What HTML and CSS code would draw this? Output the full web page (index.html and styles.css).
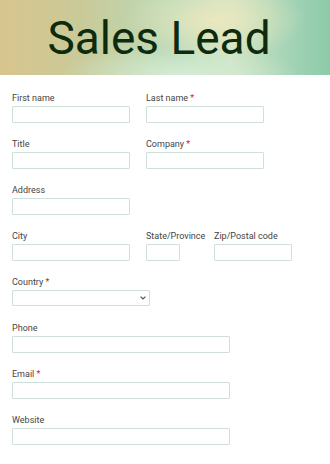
FILE: index.html
```html
<!DOCTYPE html>
<html lang="en">
<head>
    <meta charset="UTF-8">
    <title>Sales Lead</title>
    <link rel="stylesheet" href="styles.css">
</head>
<body>
<div class="banner">
    <h1>Sales Lead</h1>
</div>

<form class="lead-form">
    <div class="row">
        <div class="field w118">
            <label>First name</label>
            <input type="text">
        </div>
        <div class="field w118">
            <label>Last name <span class="req">*</span></label>
            <input type="text">
        </div>
    </div>
    <div class="row">
        <div class="field w118">
            <label>Title</label>
            <input type="text">
        </div>
        <div class="field w118">
            <label>Company <span class="req">*</span></label>
            <input type="text">
        </div>
    </div>
    <div class="row">
        <div class="field w118">
            <label>Address</label>
            <input type="text">
        </div>
    </div>
    <div class="row">
        <div class="field w118">
            <label>City</label>
            <input type="text">
        </div>
        <div class="field w52">
            <label>State/Province</label>
            <input type="text" class="short">
        </div>
        <div class="field w78">
            <label>Zip/Postal code</label>
            <input type="text">
        </div>
    </div>
    <div class="row">
        <div class="field w138">
            <label>Country <span class="req">*</span></label>
            <div class="select-wrap">
                <select><option></option></select>
                <svg class="chev" width="6" height="4" viewBox="0 0 6 4"><path d="M0.6 0.6 L3 3 L5.4 0.6" fill="none" stroke="#555" stroke-width="1.2"/></svg>
            </div>
        </div>
    </div>
    <div class="row">
        <div class="field w218">
            <label>Phone</label>
            <input type="text">
        </div>
    </div>
    <div class="row">
        <div class="field w218">
            <label>Email <span class="req">*</span></label>
            <input type="text">
        </div>
    </div>
    <div class="row">
        <div class="field w218">
            <label>Website</label>
            <input type="text">
        </div>
    </div>
</form>
</body>
</html>
```

FILE: styles.css
```css
body {
    margin: 0;
    font-family: Roboto, "Liberation Sans", sans-serif;
    background: #fff;
}

.banner {
    height: 75px;
    background:
        radial-gradient(ellipse 90px 40px at 215px 20px, rgba(238, 232, 190, 0.9), rgba(238, 232, 190, 0) 100%),
        radial-gradient(ellipse 120px 30px at 180px 75px, rgba(215, 238, 215, 0.9), rgba(215, 238, 215, 0) 100%),
        linear-gradient(90deg, #d8c58e 0%, #c9ca99 25%, #b9dcbb 55%, #cfe3c4 70%, #9fd2b4 90%, #8ccaa8 100%);
    display: flex;
    justify-content: center;
    align-items: center;
}

.banner h1 {
    margin: 0;
    padding-right: 12px;
    font-size: 46px;
    font-weight: 400;
    color: #0d2b0e;
    line-height: 1;
}

.lead-form {
    padding: 18px 12px 0;
}

.row {
    display: flex;
    gap: 16px;
    height: 46px;
}

.field {
    display: flex;
    flex-direction: column;
}

.field label {
    font-size: 9px;
    color: #444;
    line-height: 11px;
    height: 13px;
    white-space: nowrap;
}

.req {
    color: #d0202c;
}

.field input,
.field select {
    box-sizing: border-box;
    height: 17px;
    margin: 0;
    border: 1px solid #cfe0d8;
    border-radius: 1px;
    background: #fff;
    font-size: 9px;
    padding: 0 3px;
}

.field input.short {
    width: 34px;
}

.select-wrap {
    position: relative;
    height: 16px;
}

.field select {
    display: block;
    width: 100%;
    height: 16px;
    appearance: none;
}

.chev {
    position: absolute;
    right: 4px;
    top: 6px;
}

.w118 { width: 118px; }
.w52 { width: 52px; }
.w78 { width: 78px; }
.w138 { width: 138px; }
.w218 { width: 218px; }
```
